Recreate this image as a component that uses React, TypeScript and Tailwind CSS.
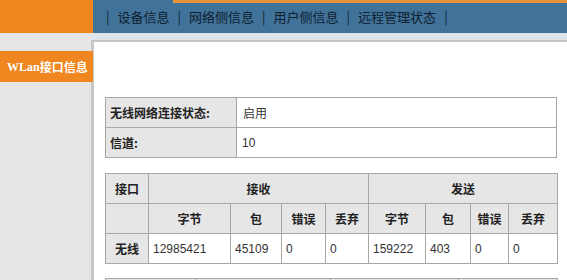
const cjk = "font-['SimSun','Noto_Sans_CJK_SC',sans-serif]";

const navItems = ["设备信息", "网络侧信息", "用户侧信息", "远程管理状态"];

const cell = "border border-[#a8a8a0] h-[30px] text-[12px] align-middle";
const head = `${cell} bg-[#e6e6e6] font-bold text-center text-[#222]`;
const num = `${cell} bg-white px-[4px] text-[11px] font-['Liberation_Sans',sans-serif] text-[#333]`;

export default function App() {
  return (
    <div className={`w-[567px] h-[280px] overflow-hidden bg-white ${cjk}`}>
      <header className="flex h-[33px]">
        <div className="w-[93px] bg-[#f0861f]" />
        <div className="flex-1 flex flex-col bg-[#41729a]">
          <div className="ml-[80px] h-[3px] bg-[#e8943a]" />
          <nav className="flex items-center h-[28px] pl-[13px] text-[13px] text-[#0f1f30]">
            <span>|</span>
            {navItems.map((t) => (
              <span key={t} className="flex items-center">
                <span className="px-[8px]">{t}</span>
                <span>|</span>
              </span>
            ))}
          </nav>
        </div>
      </header>

      <div className="flex h-[247px] overflow-hidden">
        <aside className="w-[91px] shrink-0 bg-[#e5e5e5] pt-[18px]">
          <div className="w-[93px] h-[31px] bg-[#f0861f] flex items-center pl-[7px] text-white text-[12px] font-bold relative z-10">
            <span className="font-['Liberation_Serif',serif]">WLan</span>
            <span>接口信息</span>
          </div>
        </aside>

        <main className="flex-1 flex flex-col">
          <div className="h-[7px] shrink-0 bg-[#dde4ea]" />
          <div className="h-[2px] shrink-0 bg-[#c4c4c4]" />
          <div className="flex-1 shrink-0 bg-white border-l-[3px] border-[#c8c8c8] pl-[11px] pr-[10px] pt-[55px]">
            <table className="w-[452px] border-collapse">
              <tbody>
                <tr>
                  <td className={`${cell} w-[131px] bg-[#e6e6e6] font-bold pl-[4px] text-[#222]`}>无线网络连接状态:</td>
                  <td className={`${cell} pl-[6px] text-[#333]`}>启用</td>
                </tr>
                <tr>
                  <td className={`${cell} bg-[#e6e6e6] font-bold pl-[4px] text-[#222]`}>信道:</td>
                  <td className={`${cell} pl-[5px] text-[11px] font-['Liberation_Sans',sans-serif] text-[#333]`}>10</td>
                </tr>
              </tbody>
            </table>

            <table className="w-[452px] mt-[15px] border-collapse table-fixed">
              <colgroup>
                <col className="w-[43px]" />
                <col className="w-[82px]" />
                <col className="w-[51px]" />
                <col className="w-[44px]" />
                <col className="w-[43px]" />
                <col className="w-[57px]" />
                <col className="w-[45px]" />
                <col className="w-[38px]" />
                <col className="w-[49px]" />
              </colgroup>
              <tbody>
                <tr>
                  <td className={head}>接口</td>
                  <td className={head} colSpan={4}>接收</td>
                  <td className={head} colSpan={4}>发送</td>
                </tr>
                <tr>
                  <td className={head} />
                  {["字节", "包", "错误", "丢弃", "字节", "包", "错误", "丢弃"].map((t, i) => (
                    <td key={i} className={head}>{t}</td>
                  ))}
                </tr>
                <tr>
                  <td className={head}>无线</td>
                  {["12985421", "45109", "0", "0", "159222", "403", "0", "0"].map((t, i) => (
                    <td key={i} className={num}>{t}</td>
                  ))}
                </tr>
              </tbody>
            </table>

            <table className="w-[452px] mt-[14px] border-collapse table-fixed">
              <colgroup>
                <col className="w-[90px]" />
                <col className="w-[135px]" />
                <col className="w-[128px]" />
                <col className="w-[99px]" />
              </colgroup>
              <tbody>
                <tr>
                  <td className={`${cell} bg-[#e6e6e6]`} />
                  <td className={`${cell} bg-[#e6e6e6]`} />
                  <td className={`${cell} bg-[#e6e6e6]`} />
                  <td className={`${cell} bg-[#e6e6e6]`} />
                </tr>
              </tbody>
            </table>
          </div>
        </main>
      </div>
    </div>
  );
}
